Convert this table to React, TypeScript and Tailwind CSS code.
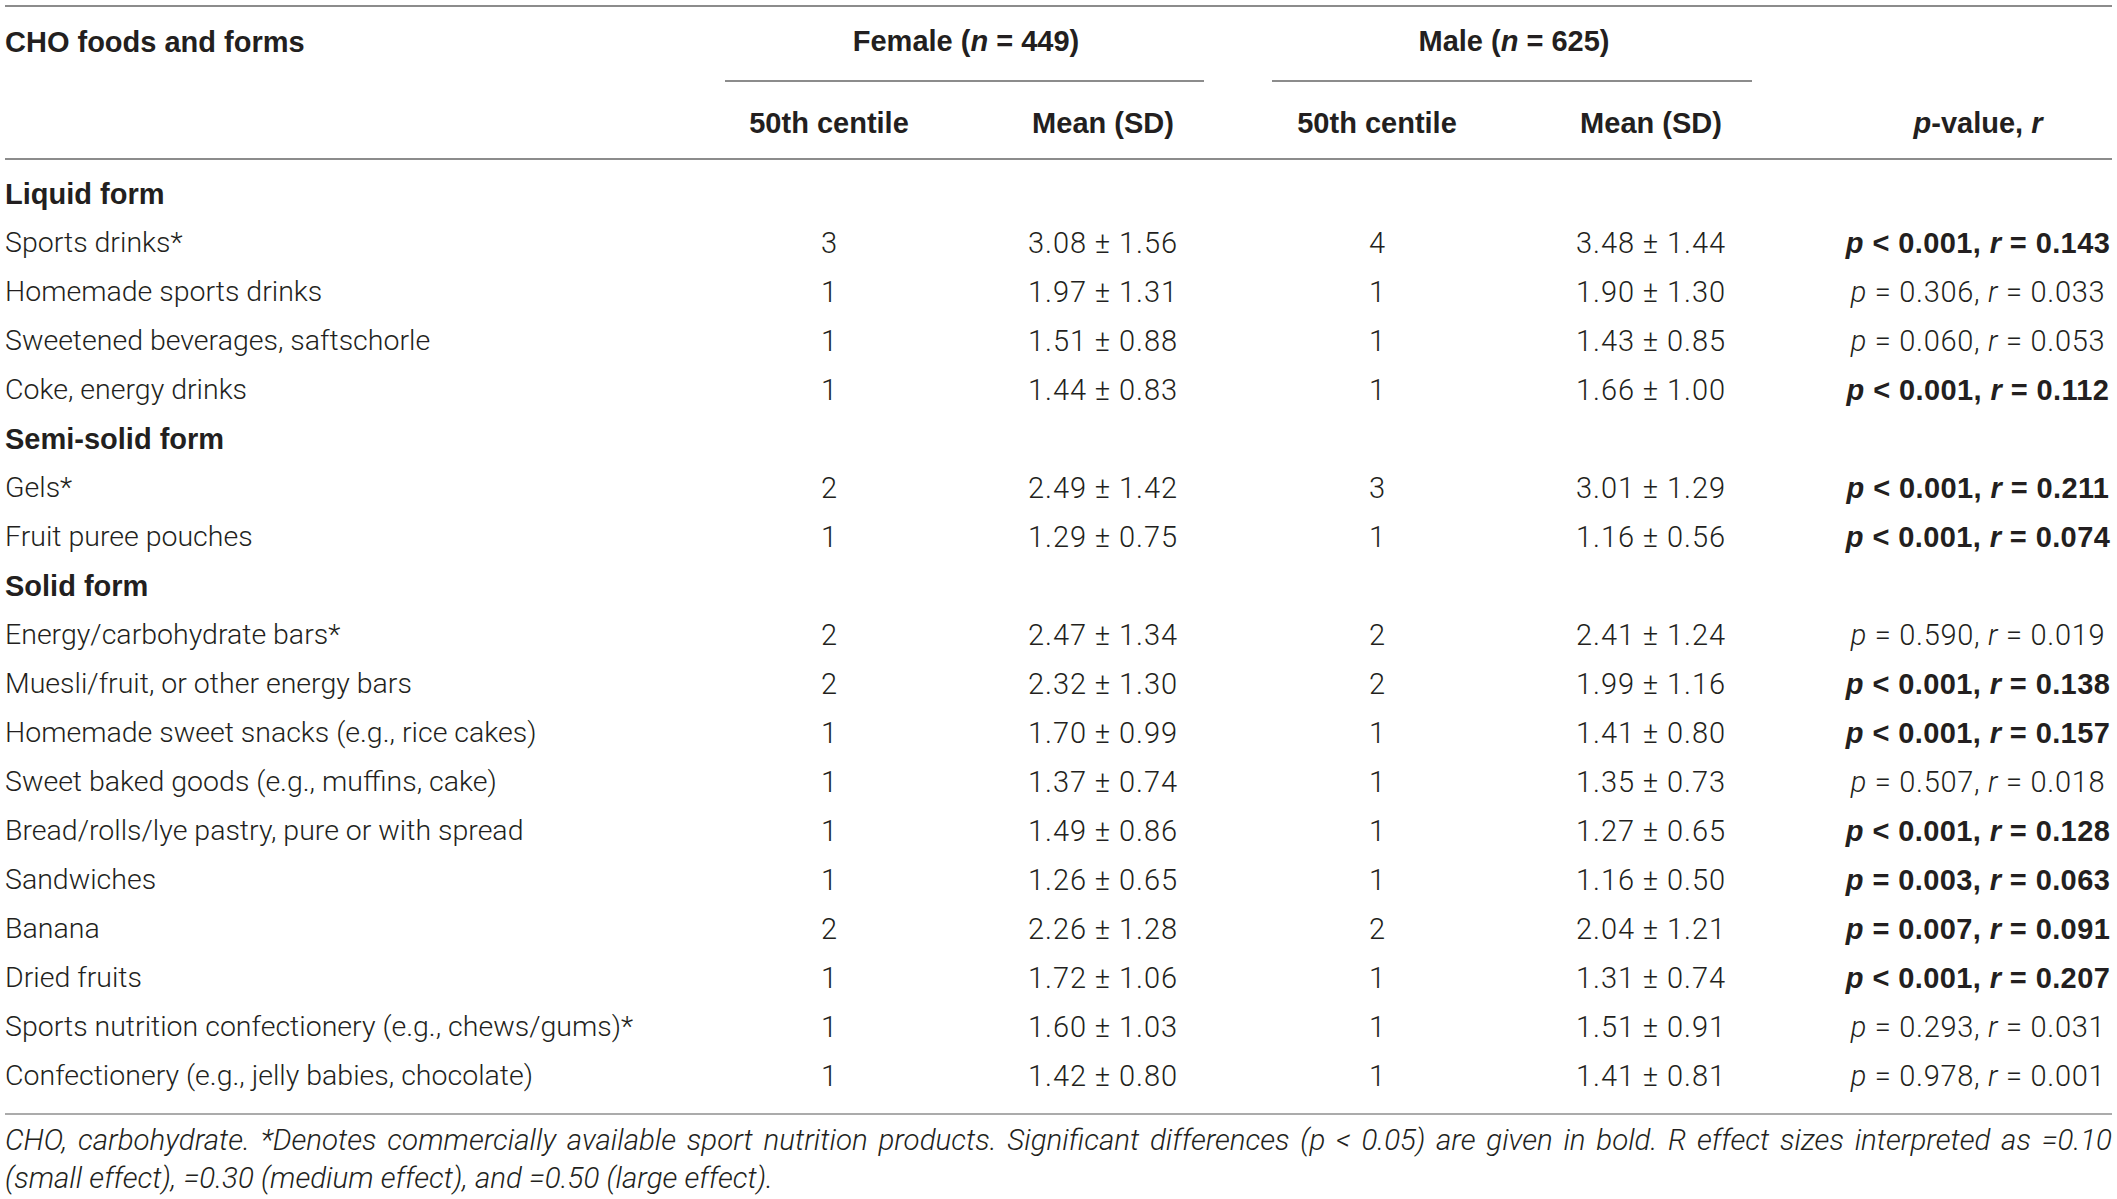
import React from "react";

type Item = {
  label: string;
  f50: string;
  fMean: string;
  m50: string;
  mMean: string;
  op: "<" | "=";
  p: string;
  r: string;
  bold?: boolean;
};

type Section = { title: string; items: Item[] };

const sections: Section[] = [
  {
    title: "Liquid form",
    items: [
      { label: "Sports drinks*", f50: "3", fMean: "3.08 ± 1.56", m50: "4", mMean: "3.48 ± 1.44", op: "<", p: "0.001", r: "0.143", bold: true },
      { label: "Homemade sports drinks", f50: "1", fMean: "1.97 ± 1.31", m50: "1", mMean: "1.90 ± 1.30", op: "=", p: "0.306", r: "0.033" },
      { label: "Sweetened beverages, saftschorle", f50: "1", fMean: "1.51 ± 0.88", m50: "1", mMean: "1.43 ± 0.85", op: "=", p: "0.060", r: "0.053" },
      { label: "Coke, energy drinks", f50: "1", fMean: "1.44 ± 0.83", m50: "1", mMean: "1.66 ± 1.00", op: "<", p: "0.001", r: "0.112", bold: true },
    ],
  },
  {
    title: "Semi-solid form",
    items: [
      { label: "Gels*", f50: "2", fMean: "2.49 ± 1.42", m50: "3", mMean: "3.01 ± 1.29", op: "<", p: "0.001", r: "0.211", bold: true },
      { label: "Fruit puree pouches", f50: "1", fMean: "1.29 ± 0.75", m50: "1", mMean: "1.16 ± 0.56", op: "<", p: "0.001", r: "0.074", bold: true },
    ],
  },
  {
    title: "Solid form",
    items: [
      { label: "Energy/carbohydrate bars*", f50: "2", fMean: "2.47 ± 1.34", m50: "2", mMean: "2.41 ± 1.24", op: "=", p: "0.590", r: "0.019" },
      { label: "Muesli/fruit, or other energy bars", f50: "2", fMean: "2.32 ± 1.30", m50: "2", mMean: "1.99 ± 1.16", op: "<", p: "0.001", r: "0.138", bold: true },
      { label: "Homemade sweet snacks (e.g., rice cakes)", f50: "1", fMean: "1.70 ± 0.99", m50: "1", mMean: "1.41 ± 0.80", op: "<", p: "0.001", r: "0.157", bold: true },
      { label: "Sweet baked goods (e.g., muffins, cake)", f50: "1", fMean: "1.37 ± 0.74", m50: "1", mMean: "1.35 ± 0.73", op: "=", p: "0.507", r: "0.018" },
      { label: "Bread/rolls/lye pastry, pure or with spread", f50: "1", fMean: "1.49 ± 0.86", m50: "1", mMean: "1.27 ± 0.65", op: "<", p: "0.001", r: "0.128", bold: true },
      { label: "Sandwiches", f50: "1", fMean: "1.26 ± 0.65", m50: "1", mMean: "1.16 ± 0.50", op: "=", p: "0.003", r: "0.063", bold: true },
      { label: "Banana", f50: "2", fMean: "2.26 ± 1.28", m50: "2", mMean: "2.04 ± 1.21", op: "=", p: "0.007", r: "0.091", bold: true },
      { label: "Dried fruits", f50: "1", fMean: "1.72 ± 1.06", m50: "1", mMean: "1.31 ± 0.74", op: "<", p: "0.001", r: "0.207", bold: true },
      { label: "Sports nutrition confectionery (e.g., chews/gums)*", f50: "1", fMean: "1.60 ± 1.03", m50: "1", mMean: "1.51 ± 0.91", op: "=", p: "0.293", r: "0.031" },
      { label: "Confectionery (e.g., jelly babies, chocolate)", f50: "1", fMean: "1.42 ± 0.80", m50: "1", mMean: "1.41 ± 0.81", op: "=", p: "0.978", r: "0.001" },
    ],
  },
];

const grid = "grid grid-cols-[687px_274px_274px_274px_274px_1fr]";
const light = "font-['Roboto','Liberation_Sans',sans-serif] font-light";
const bold = "font-['Liberation_Sans','Arial',sans-serif] font-bold";

const PValue: React.FC<{ item: Item }> = ({ item }) => (
  <div
    className={`pl-[56px] text-center whitespace-nowrap ${
      item.bold ? `${bold} tracking-[0.4px]` : `${light} tracking-[0.7px]`
    }`}
  >
    <i>p</i> {item.op} {item.p}, <i>r</i> = {item.r}
  </div>
);

export default function App() {
  return (
    <div className="w-[2117px] h-[1199px] bg-white text-[#231f20] text-[29px] px-[5px] pt-[5px]">
      {/* header */}
      <div className="border-t-2 border-[#8c8c8c]">
        <div className={`${grid} h-[75px] items-center ${bold}`}>
          <div className="pb-[4px]">CHO foods and forms</div>
          <div className="col-span-2 h-full flex flex-col">
            <div className="flex-1 flex items-center justify-center pb-[4px]">
              Female (<i>n</i>&nbsp;= 449)
            </div>
            <div className="ml-[33px] mr-[36px] border-b-2 border-[#8c8c8c]" />
          </div>
          <div className="col-span-2 h-full flex flex-col">
            <div className="flex-1 flex items-center justify-center pb-[4px]">
              Male (<i>n</i>&nbsp;= 625)
            </div>
            <div className="ml-[32px] mr-[36px] border-b-2 border-[#8c8c8c]" />
          </div>
          <div />
        </div>
        <div className={`${grid} h-[78px] items-center text-center border-b-2 border-[#8c8c8c] ${bold}`}>
          <div className="pt-[7px]" />
          <div className="pt-[7px]">50th centile</div>
          <div className="pt-[7px]">Mean (SD)</div>
          <div className="pt-[7px]">50th centile</div>
          <div className="pt-[7px]">Mean (SD)</div>
          <div className="pt-[7px] pl-[56px]">
            <i>p</i>-value, <i>r</i>
          </div>
        </div>
      </div>

      {/* body */}
      <div className="pt-[10px] pb-[12px] border-b-2 border-[#ababab]">
        {sections.map((s) => (
          <React.Fragment key={s.title}>
            <div className={`h-[49px] flex items-center ${bold}`}>{s.title}</div>
            {s.items.map((it) => (
              <div key={it.label} className={`${grid} h-[49px] items-center text-center ${light}`}>
                <div className="text-left whitespace-nowrap text-[28.5px]">{it.label}</div>
                <div>{it.f50}</div>
                <div className="tracking-[0.9px]">{it.fMean}</div>
                <div>{it.m50}</div>
                <div className="tracking-[0.9px]">{it.mMean}</div>
                <PValue item={it} />
              </div>
            ))}
          </React.Fragment>
        ))}
      </div>

      {/* footnote */}
      <p className={`pt-[6px] text-[29.5px] leading-[38px] italic text-justify ${light}`}>
        CHO, carbohydrate. *Denotes commercially available sport nutrition products. Significant differences (p &lt; 0.05) are
        given in bold. R effect sizes interpreted as =0.10 (small effect), =0.30 (medium effect), and =0.50 (large effect).
      </p>
    </div>
  );
}
